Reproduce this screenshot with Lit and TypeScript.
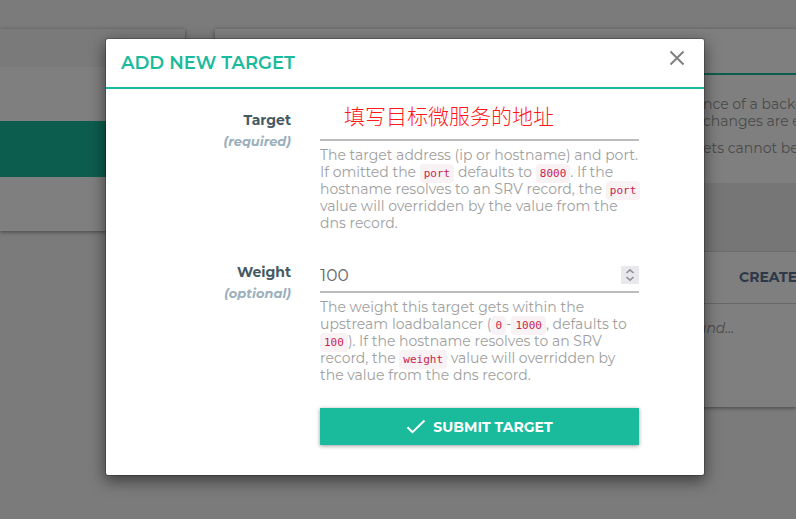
import { LitElement, html, css } from "lit";
import { customElement, property } from "lit/decorators.js";

@customElement("page-backdrop")
class PageBackdrop extends LitElement {
  static styles = css`
    :host {
      display: grid;
      grid-template-columns: 185px 1fr;
      column-gap: 30px;
      align-items: start;
      padding-top: 29px;
      min-height: 100vh;
      box-sizing: border-box;
      background: #f6f6f6;
      color: #969696;
      overflow: hidden;
    }
    .panel {
      min-width: 0;
      background: #fff;
      box-shadow: 0 1px 4px rgba(0, 0, 0, 0.45);
    }
    .side-head {
      height: 38px;
      background: #f5f5f5;
    }
    .side-body {
      padding: 54px 0;
    }
    .active {
      height: 56px;
      background: #1abb9c;
    }
    .main-head {
      height: 44px;
      border-bottom: 2px solid #1abb9c;
    }
    .about {
      height: 87px;
      padding: 21px 0 0 488px;
      line-height: 17px;
      white-space: nowrap;
    }
    p {
      margin: 0 0 10px;
    }
    .tools {
      height: 68px;
      background: #ececec;
    }
    .bar {
      padding-left: 524px;
      line-height: 51px;
      border-top: 1px solid #d8d8d8;
      border-bottom: 1px solid #d0d0d0;
      color: #5a7391;
      font-weight: 700;
      white-space: nowrap;
    }
    .empty {
      height: 87px;
      padding: 16px 0 0 482px;
      line-height: 17px;
      font-style: italic;
    }
  `;

  render() {
    return html`
      <aside class="panel">
        <div class="side-head"></div>
        <div class="side-body"><div class="active"></div></div>
      </aside>
      <main class="panel">
        <div class="main-head"></div>
        <div class="about">
          <p>nce of a backe<br />changes are ef</p>
          <p>ets cannot be</p>
        </div>
        <div class="tools"></div>
        <div class="bar">CREATE</div>
        <div class="empty">und...</div>
      </main>
    `;
  }
}

@customElement("form-row")
class FormRow extends LitElement {
  @property() label = "";
  @property() note = "";
  @property() kind = "text";
  @property() value = "";

  static styles = css`
    :host {
      display: grid;
      grid-template-columns: 170px minmax(0, 1fr);
      column-gap: 29px;
    }
    label {
      padding-top: 3px;
      text-align: right;
      line-height: 21px;
      font-size: 14px;
      font-weight: 700;
      color: #455a64;
    }
    .note {
      display: block;
      font-size: 13px;
      font-style: italic;
      color: #9ab0bc;
    }
    .control {
      display: flex;
      align-items: center;
      height: 32px;
      border-bottom: 2px solid #bdbdbd;
    }
    input {
      flex: 1;
      min-width: 0;
      height: 30px;
      padding: 0;
      border: 0;
      outline: 0;
      background: none;
      font-family: inherit;
      font-size: 17px;
      color: #666;
      appearance: textfield;
    }
    input::-webkit-inner-spin-button {
      appearance: none;
      margin: 0;
    }
    .text {
      padding: 0 0 16px 24px;
      height: 36px;
      font-family: "Noto Sans CJK SC", sans-serif;
      font-size: 21px;
      font-weight: 300;
      color: #ff1a1a;
    }
    .stepper {
      width: 18px;
      height: 18px;
      background: #e9e9ed;
    }
    .help {
      margin-top: 6px;
    }
  `;

  render() {
    return html`
      <label for="field">${this.label}<span class="note">(${this.note})</span></label>
      <div>
        <div class="control">
          <input id="field" class=${this.kind} type=${this.kind} .value=${this.value} />
          ${this.kind === "number"
            ? html`<svg class="stepper" viewBox="0 0 18 18" fill="none" stroke="#8f8f9d" stroke-width="1.6" aria-hidden="true">
                <path d="M5.5 7L9 3.8L12.5 7M5.5 11L9 14.2L12.5 11" />
              </svg>`
            : null}
        </div>
        <div class="help"><slot></slot></div>
      </div>
    `;
  }
}

@customElement("app-root")
class AppRoot extends LitElement {
  static styles = css`
    :host {
      display: grid;
      grid-template-columns: minmax(0, 1fr);
      min-height: 100vh;
      font-family: Montserrat, Inter, sans-serif;
      font-size: 14px;
      overflow: hidden;
    }
    page-backdrop,
    .overlay {
      grid-area: 1 / 1;
      min-width: 0;
    }
    .overlay {
      z-index: 1;
      padding: 38px 16px 38px 30px;
      background: rgba(0, 0, 0, 0.5);
    }
    .modal {
      box-sizing: border-box;
      max-width: 600px;
      margin: 0 auto;
      border: 1px solid rgba(0, 0, 0, 0.2);
      border-radius: 3px;
      background: #fff;
      background-clip: padding-box;
      box-shadow: 0 5px 15px rgba(0, 0, 0, 0.5);
    }
    header {
      display: flex;
      align-items: center;
      justify-content: space-between;
      height: 48px;
      padding: 0 19px 0 15px;
      border-bottom: 2px solid #1abb9c;
    }
    h4 {
      margin: 0;
      font-size: 18px;
      font-weight: 600;
      color: #1abb9c;
    }
    .close {
      display: flex;
      padding: 0 0 10px;
      border: 0;
      background: none;
    }
    form {
      display: grid;
      grid-template-columns: minmax(0, 1fr);
      padding: 18px 65px 30px 15px;
      line-height: 17px;
      color: #a0a0a0;
      white-space: nowrap;
    }
    .second {
      margin-top: 27px;
    }
    code {
      padding: 3px 4px;
      border-radius: 4px;
      background: #f9f2f4;
      font-family: "DejaVu Sans Mono", monospace;
      font-size: 11px;
      line-height: 11px;
      color: #c7254e;
    }
    .submit {
      display: flex;
      align-items: center;
      justify-content: center;
      gap: 7px;
      height: 37px;
      margin: 24px 0 0 199px;
      padding: 0;
      border: 0;
      background: #1abb9c;
      box-shadow: 0 1px 4px rgba(0, 0, 0, 0.4);
      font-family: inherit;
      font-size: 14px;
      font-weight: 700;
      color: #fff;
    }
  `;

  render() {
    return html`
      <page-backdrop></page-backdrop>
      <div class="overlay">
        <section class="modal" role="dialog" aria-labelledby="title">
          <header>
            <h4 id="title">ADD NEW TARGET</h4>
            <button class="close" type="button" aria-label="Close">
              <svg width="16" height="16" viewBox="0 0 16 16" fill="none" stroke="#808080" stroke-width="2">
                <path d="M1.5 1.5L14.5 14.5M14.5 1.5L1.5 14.5" />
              </svg>
            </button>
          </header>
          <form>
            <form-row label="Target" note="required" kind="text" value="填写目标微服务的地址">
              The target address (ip or hostname) and port.<br />
              If omitted the <code>port</code> defaults to <code>8000</code>. If the<br />
              hostname resolves to an SRV record, the <code>port</code><br />
              value will overridden by the value from the<br />
              dns record.
            </form-row>
            <form-row class="second" label="Weight" note="optional" kind="number" value="100">
              The weight this target gets within the<br />
              upstream loadbalancer (<code>0</code>-<code>1000</code>, defaults to<br />
              <code>100</code>). If the hostname resolves to an SRV<br />
              record, the <code>weight</code> value will overridden by<br />
              the value from the dns record.
            </form-row>
            <button class="submit" type="button">
              <svg width="20" height="16" viewBox="0 0 20 16" fill="none" stroke="#fff" stroke-width="2">
                <path d="M1.5 8.2L6.5 13.2L18.5 1.5" />
              </svg>
              SUBMIT TARGET
            </button>
          </form>
        </section>
      </div>
    `;
  }
}
